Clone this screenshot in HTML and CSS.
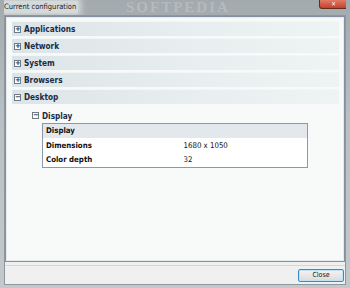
FILE: index.html
```html
<!DOCTYPE html>
<html>
<head>
    <title>Current configuration</title>
    <meta charset="UTF-8">
    <link rel="stylesheet" href="styles.css">
</head>
<body>
    <div class="window">
        <div class="titlebar">
            <span class="title">Current configuration</span>
            <span class="watermark">SOFTPEDIA</span>
            <span class="close-x">&#x2715;</span>
        </div>

        <div class="client">
            <div class="panel">
                <div class="group"><span class="toggle">+</span>Applications</div>
                <div class="group"><span class="toggle">+</span>Network</div>
                <div class="group"><span class="toggle">+</span>System</div>
                <div class="group"><span class="toggle">+</span>Browsers</div>
                <div class="group"><span class="toggle">&minus;</span>Desktop</div>

                <div class="section">
                    <div class="section-title"><span class="toggle">&minus;</span>Display</div>
                    <table class="props">
                        <tr class="head"><td colspan="2">Display</td></tr>
                        <tr><th>Dimensions</th><td>1680 x 1050</td></tr>
                        <tr><th>Color depth</th><td>32</td></tr>
                    </table>
                </div>
            </div>

            <div class="footer">
                <button class="btn">Close</button>
            </div>
        </div>
    </div>
</body>
</html>
```

FILE: styles.css
```css
* {
    box-sizing: border-box;
    margin: 0;
    padding: 0;
}

body {
    width: 350px;
    height: 288px;
    overflow: hidden;
    font-family: "DejaVu Sans Condensed", "DejaVu Sans", sans-serif;
    color: #1e2a3a;
}

.window {
    height: 288px;
    display: flex;
    flex-direction: column;
    background: linear-gradient(to bottom, #a2aaae, #b9c0c3 40%, #c3c9cb);
    padding: 0 4px 3px 4px;
}

.titlebar {
    position: relative;
    height: 15px;
    flex-shrink: 0;
    overflow: hidden;
}

.title {
    position: absolute;
    left: -2px;
    top: 1px;
    padding: 0 2px;
    font-size: 7.5px;
    line-height: 12px;
    color: #1d1d1d;
    background: rgba(230, 232, 232, 0.75);
    box-shadow: 0 0 6px 3px rgba(230, 232, 232, 0.75);
}

.watermark {
    position: absolute;
    left: 122px;
    top: 0;
    font-family: "Liberation Serif", serif;
    font-size: 15px;
    line-height: 14px;
    font-weight: bold;
    letter-spacing: 2px;
    color: rgba(255, 255, 255, 0.2);
}

.close-x {
    position: absolute;
    right: -2px;
    top: 0;
    width: 29px;
    height: 9px;
    border-radius: 0 0 3px 3px;
    border: 1px solid #6b2a20;
    border-top: none;
    background: linear-gradient(to bottom, #e07a66, #c4412a);
    color: #fff;
    font-size: 6px;
    line-height: 8px;
    text-align: center;
    font-weight: bold;
}

.client {
    flex: 1;
    display: flex;
    flex-direction: column;
    background: #f0f0f0;
    border: 1px solid #8e979d;
}

.panel {
    flex: 1;
    background: #f8fafa;
    border: 1px solid #8492a0;
    box-shadow: inset 0 0 0 1px #e6ebee;
    padding: 4px 5px 0 6px;
    display: flex;
    flex-direction: column;
    gap: 2px;
}

.group,
.section-title {
    height: 15px;
    display: flex;
    align-items: center;
    font-size: 8.2px;
    font-weight: bold;
    color: #1c2b45;
}

.group {
    background: linear-gradient(to right, #dbe4e7, #e9eff0 60%, #eef3f3);
    border-top: 1px solid #f2f6f6;
    padding-left: 2px;
}

.toggle {
    width: 7px;
    height: 7px;
    flex-shrink: 0;
    border: 1px solid #6f7c88;
    background: #fbfcfd;
    font-size: 7px;
    line-height: 5px;
    text-align: center;
    color: #1c2b45;
    margin-right: 3px;
    font-family: "DejaVu Sans", sans-serif;
    font-weight: bold;
    overflow: hidden;
}

.section {
    margin-top: 2px;
    padding-left: 20px;
}

.props {
    width: 266px;
    margin: 0 0 0 10px;
    border: 1px solid #8a99aa;
    border-collapse: collapse;
    background: #fff;
    font-size: 7.8px;
}

.props td,
.props th {
    height: 15px;
    padding: 0 3px;
    text-align: left;
    color: #111;
}

.props th {
    width: 138px;
    font-weight: bold;
}

.props .head td {
    height: 14px;
    font-weight: bold;
    background: #e3e8ed;
}

.footer {
    height: 19px;
    flex-shrink: 0;
    border-top: 1px solid #d6d6d6;
    margin-top: 3px;
    display: flex;
    justify-content: flex-end;
    align-items: center;
    padding-right: 1px;
}

.btn {
    width: 46px;
    height: 13px;
    font-family: inherit;
    font-size: 7px;
    color: #111;
    border: 1px solid #3c8cc4;
    border-radius: 2px;
    background: linear-gradient(to bottom, #f3f3f3, #e8e8e8 50%, #dadada);
    box-shadow: inset 0 0 0 1px #bfe3f5;
}
```
